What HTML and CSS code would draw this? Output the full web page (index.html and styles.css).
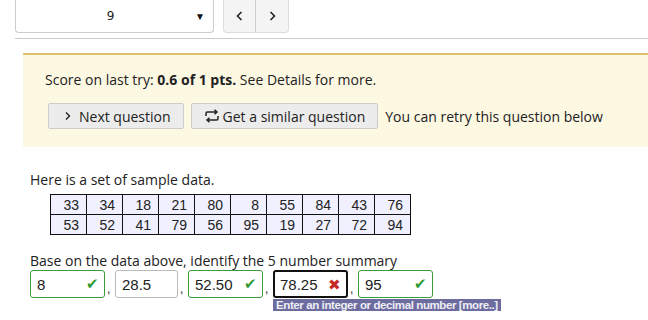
FILE: index.html
```html
<!DOCTYPE html>
<html lang="en">

<head>
    <link rel="stylesheet" href="styles.css">
    <title>Question</title>
</head>

<body>
    <div class="topbar">
        <div class="select">
            <span class="select-val">9</span>
            <span class="select-arrow">&#9660;</span>
        </div>
        <div class="nav">
            <button class="nav-btn">
                <svg width="10" height="12" viewBox="0 0 10 12"><path d="M6.5 2 L2.5 6 L6.5 10" fill="none" stroke="#222" stroke-width="1.6"/></svg>
            </button>
            <button class="nav-btn">
                <svg width="10" height="12" viewBox="0 0 10 12"><path d="M3.5 2 L7.5 6 L3.5 10" fill="none" stroke="#222" stroke-width="1.6"/></svg>
            </button>
        </div>
    </div>
    <hr class="rule">

    <div class="notice">
        <p>Score on last try: <b>0.6 of 1 pts.</b> See Details for more.</p>
        <div class="actions">
            <button class="btn">
                <svg width="10" height="12" viewBox="0 0 10 12"><path d="M3 2.5 L6.5 6 L3 9.5" fill="none" stroke="#222" stroke-width="1.4"/></svg>
                Next question
            </button>
            <button class="btn">
                <svg width="16" height="14" viewBox="0 0 16 14"><path d="M2 7 V4.5 Q2 3 3.5 3 H13 M10.5 0.8 L13 3 L10.5 5.2 M14 7 V9.5 Q14 11 12.5 11 H3 M5.5 8.8 L3 11 L5.5 13.2" fill="none" stroke="#222" stroke-width="1.5"/></svg>
                Get a similar question
            </button>
            <span class="retry">You can retry this question below</span>
        </div>
    </div>

    <div class="question">
        <p>Here is a set of sample data.</p>
        <table class="data">
            <tr><td>33</td><td>34</td><td>18</td><td>21</td><td>80</td><td>8</td><td>55</td><td>84</td><td>43</td><td>76</td></tr>
            <tr><td>53</td><td>52</td><td>41</td><td>79</td><td>56</td><td>95</td><td>19</td><td>27</td><td>72</td><td>94</td></tr>
        </table>
        <p class="prompt">Base on the data above, identify the 5 number summary</p>
        <div class="answers">
            <div class="ans ok wide">8<span class="mark check">&#10004;</span></div><span class="comma">,</span>
            <div class="ans">28.5</div><span class="comma">,</span>
            <div class="ans ok wide">52.50<span class="mark check">&#10004;</span></div><span class="comma">,</span>
            <div class="tipwrap">
                <div class="ans focus wide">78.25<span class="mark cross">&#10006;</span></div>
                <div class="tip">Enter an integer or decimal number [more..]</div>
            </div><span class="comma">,</span>
            <div class="ans ok wide">95<span class="mark check">&#10004;</span></div>
        </div>
    </div>
</body>

</html>
```

FILE: styles.css
```css
* {
    margin: 0;
    padding: 0;
    box-sizing: border-box;
}

body {
    font-family: 'Open Sans', sans-serif;
    font-size: 14px;
    color: #222;
    background: #fff;
}

.topbar {
    display: flex;
    align-items: flex-end;
    height: 33px;
    padding-left: 15px;
}

.select {
    width: 199px;
    height: 33px;
    border: 1px solid #ccc;
    border-top: 0;
    border-radius: 0 0 4px 4px;
    display: flex;
    align-items: center;
    padding: 0 8px 0 0;
}

.select-val {
    flex: 1;
    text-align: center;
    font-family: 'DejaVu Sans', sans-serif;
    font-size: 12px;
    padding-left: 10px;
}

.select-arrow {
    font-size: 10px;
    color: #111;
}

.nav {
    display: flex;
    margin-left: 9px;
    height: 33px;
}

.nav-btn {
    width: 33px;
    height: 33px;
    border: 1px solid #ddd;
    border-top: 0;
    background: #f4f4f4;
    display: flex;
    align-items: center;
    justify-content: center;
}

.nav-btn:first-child {
    border-radius: 0 0 0 4px;
    border-right: 1px solid #ccc;
}

.nav-btn:last-child {
    border-left: 0;
    border-radius: 0 0 4px 0;
}

.rule {
    border: 0;
    border-top: 1px solid #ccc;
    margin: 5px 0 0 15px;
}

.notice {
    margin: 14px 0 0 23px;
    background: #fdf8e2;
    border-top: 2px solid #dcc06e;
    padding: 15px 0 16px 22px;
    height: 94px;
}

.actions {
    display: flex;
    align-items: center;
    margin-top: 14px;
}

.btn {
    font-family: inherit;
    font-size: 14px;
    color: #222;
    background: #ececec;
    border: 1px solid #ccc;
    border-radius: 2px;
    height: 26px;
    padding: 0 12px 0 14px;
    margin: 0 7px 0 3px;
    display: flex;
    align-items: center;
    gap: 6px;
}

.btn + .btn {
    margin-left: 0;
    padding-left: 12px;
    gap: 3px;
}

.question {
    padding: 23px 0 0 30px;
}

.data {
    border-collapse: collapse;
    margin: 5px 0 0 20px;
    background: #f0f0fe;
    font-family: 'Liberation Sans', sans-serif;
    font-size: 14px;
}

.data td {
    border: 1px solid #111;
    width: 36px;
    height: 20px;
    text-align: right;
    padding: 0 7px 0 0;
    line-height: 18px;
}

.prompt {
    margin-top: 16px;
}

.answers {
    display: flex;
    align-items: flex-start;
}

.ans {
    height: 28px;
    width: 63px;
    border: 1px solid #bbb;
    border-radius: 3px;
    font-family: 'Liberation Sans', sans-serif;
    font-size: 15px;
    display: flex;
    align-items: center;
    padding: 0 6px;
    position: relative;
}

.wide {
    width: 75px;
}

.ok {
    border-color: #3b9c3b;
}

.focus {
    border: 2px solid #111;
    padding: 0 5px;
}

.mark {
    position: absolute;
    right: 5px;
    top: 4px;
    font-size: 15px;
}

.check {
    color: #2e9a36;
}

.cross {
    color: #c62828;
}

.comma {
    width: 10px;
    padding: 12px 0 0 2px;
    font-family: 'Liberation Sans', sans-serif;
    font-size: 12px;
}

.tipwrap {
    display: flex;
    flex-direction: column;
    width: 75px;
}

.tip {
    margin-top: 1px;
    width: max-content;
    white-space: nowrap;
    background: #6c6c9e;
    color: #eeeef6;
    font-family: 'Liberation Sans', sans-serif;
    font-weight: bold;
    font-size: 11.5px;
    line-height: 12px;
    padding: 0 3px;
    letter-spacing: -0.4px;
}
```
